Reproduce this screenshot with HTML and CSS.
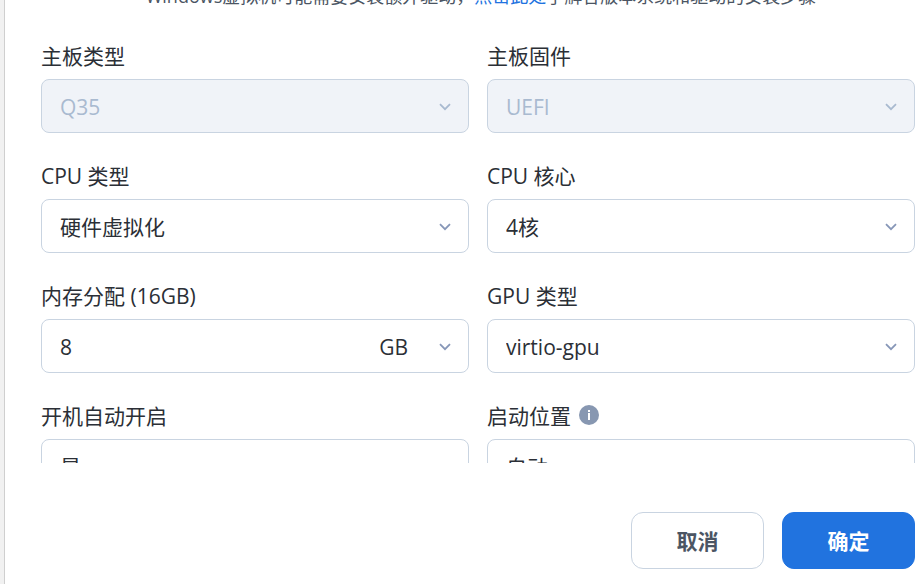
FILE: index.html
```html
<!DOCTYPE html>
<html lang="zh-CN">
<head>
    <meta charset="UTF-8">
    <meta name="viewport" content="width=device-width, initial-scale=1.0">
    <title>虚拟机设置</title>
    <link rel="stylesheet" href="styles.css">
</head>
<body>
    <svg class="symbols" aria-hidden="true">
        <symbol id="chevron" viewBox="0 0 12 8">
            <path d="M1 1.2 L6 6.2 L11 1.2" fill="none" stroke="currentColor" stroke-width="1.8"/>
        </symbol>
    </svg>

    <form class="dialog">
        <main class="content">
            <p class="note">Windows虚拟机可能需要安装额外驱动，<a href="#drivers">点击此处</a>了解各版本系统和驱动的安装步骤</p>

            <div class="fields">
                <div class="field">
                    <label for="board">主板类型</label>
                    <div class="select-box disabled">
                        <select id="board" disabled><option>Q35</option></select>
                        <svg class="arrow"><use href="#chevron"/></svg>
                    </div>
                </div>
                <div class="field">
                    <label for="firmware">主板固件</label>
                    <div class="select-box disabled">
                        <select id="firmware" disabled><option>UEFI</option></select>
                        <svg class="arrow"><use href="#chevron"/></svg>
                    </div>
                </div>
                <div class="field">
                    <label for="cpu-type">CPU 类型</label>
                    <div class="select-box">
                        <select id="cpu-type"><option>硬件虚拟化</option></select>
                        <svg class="arrow"><use href="#chevron"/></svg>
                    </div>
                </div>
                <div class="field">
                    <label for="cpu-cores">CPU 核心</label>
                    <div class="select-box">
                        <select id="cpu-cores"><option>4核</option></select>
                        <svg class="arrow"><use href="#chevron"/></svg>
                    </div>
                </div>
                <div class="field">
                    <label for="memory">内存分配 (16GB)</label>
                    <div class="select-box">
                        <select id="memory"><option>8</option></select>
                        <span class="unit">GB</span>
                        <svg class="arrow"><use href="#chevron"/></svg>
                    </div>
                </div>
                <div class="field">
                    <label for="gpu">GPU 类型</label>
                    <div class="select-box">
                        <select id="gpu"><option>virtio-gpu</option></select>
                        <svg class="arrow"><use href="#chevron"/></svg>
                    </div>
                </div>
                <div class="field">
                    <label for="autostart">开机自动开启</label>
                    <div class="select-box">
                        <select id="autostart"><option>是</option></select>
                        <svg class="arrow"><use href="#chevron"/></svg>
                    </div>
                </div>
                <div class="field">
                    <label for="boot">启动位置
                        <svg class="info" viewBox="0 0 20 20" aria-hidden="true">
                            <circle cx="10" cy="10" r="10" fill="#8797b1"/>
                            <path d="M9 5h2v2H9zM9 8h2v7H9z" fill="#fff"/>
                        </svg>
                    </label>
                    <div class="select-box">
                        <select id="boot"><option>自动</option></select>
                        <svg class="arrow"><use href="#chevron"/></svg>
                    </div>
                </div>
            </div>
        </main>

        <footer class="actions">
            <button type="button" class="button">取消</button>
            <button type="submit" class="button primary">确定</button>
        </footer>
    </form>
</body>
</html>
```
FILE: styles.css
```css
:root {
    --text: #2b2f36;
    --text-secondary: #4b5563;
    --muted: #a9bad0;
    --icon: #8797b8;
    --border: #c9d4e1;
    --primary: #2173df;
}

* {
    box-sizing: border-box;
}

body {
    margin: 0;
    padding-left: 4px;
    background: #f1f1f1;
    color: var(--text);
    font-family: "Open Sans", "Noto Sans CJK SC", sans-serif;
    font-size: 21px;
}

.symbols {
    display: none;
}

.dialog {
    display: flex;
    flex-direction: column;
    height: 100vh;
    border-left: 1px solid #cfcfcf;
    background: #fff;
}

.content {
    flex: 1;
    min-height: 0;
    overflow: hidden;
    padding: 0 2px 0 36px;
}

/* the list is scrolled, so the note is mostly above the edge */
.note {
    margin: -18px 0 31px;
    padding-left: 6px;
    color: var(--text-secondary);
    font-size: 18px;
    line-height: 28px;
    text-align: center;
}

.note a {
    color: var(--primary);
    text-decoration: none;
}

.fields {
    display: grid;
    grid-template-columns: 1fr 1fr;
    gap: 28px 18px;
}

.field {
    display: flex;
    flex-direction: column;
    gap: 8px;
}

.field label {
    display: flex;
    align-items: center;
    gap: 8px;
    height: 30px;
    line-height: 30px;
}

.info {
    width: 20px;
    height: 20px;
    margin-bottom: 2px;
}

.select-box {
    position: relative;
    height: 54px;
    color: var(--text);
}

.select-box select {
    width: 100%;
    height: 100%;
    padding: 2px 48px 0 18px;
    border: 1px solid var(--border);
    border-radius: 8px;
    background: #fff;
    color: inherit;
    font: inherit;
    appearance: none;
}

.select-box.disabled {
    color: var(--muted);
}

.select-box.disabled select {
    background: #f0f3f8;
    opacity: 1;
}

.arrow {
    position: absolute;
    top: 24px;
    right: 18px;
    width: 12px;
    height: 8px;
    color: var(--icon);
    pointer-events: none;
}

.disabled .arrow {
    color: var(--muted);
}

.unit {
    position: absolute;
    top: 1px;
    right: 61px;
    line-height: 54px;
    pointer-events: none;
}

.actions {
    display: flex;
    justify-content: flex-end;
    gap: 18px;
    padding: 49px 2px 15px;
}

.button {
    min-width: 133px;
    height: 57px;
    padding: 0 24px 2px;
    border: 1px solid var(--border);
    border-radius: 12px;
    background: #fff;
    color: var(--text-secondary);
    font: inherit;
    font-weight: 700;
}

.button.primary {
    border-color: var(--primary);
    background: var(--primary);
    color: #fff;
}
```
